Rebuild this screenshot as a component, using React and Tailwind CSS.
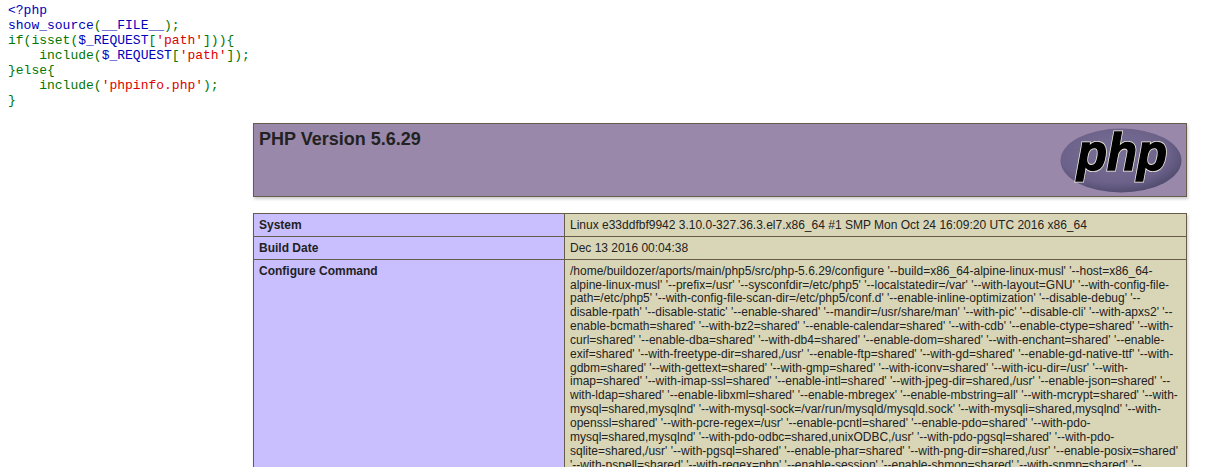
const configureLines = [
  "/home/buildozer/aports/main/php5/src/php-5.6.29/configure '--build=x86_64-alpine-linux-musl' '--host=x86_64-",
  "alpine-linux-musl' '--prefix=/usr' '--sysconfdir=/etc/php5' '--localstatedir=/var' '--with-layout=GNU' '--with-config-file-",
  "path=/etc/php5' '--with-config-file-scan-dir=/etc/php5/conf.d' '--enable-inline-optimization' '--disable-debug' '--",
  "disable-rpath' '--disable-static' '--enable-shared' '--mandir=/usr/share/man' '--with-pic' '--disable-cli' '--with-apxs2' '--",
  "enable-bcmath=shared' '--with-bz2=shared' '--enable-calendar=shared' '--with-cdb' '--enable-ctype=shared' '--with-",
  "curl=shared' '--enable-dba=shared' '--with-db4=shared' '--enable-dom=shared' '--with-enchant=shared' '--enable-",
  "exif=shared' '--with-freetype-dir=shared,/usr' '--enable-ftp=shared' '--with-gd=shared' '--enable-gd-native-ttf' '--with-",
  "gdbm=shared' '--with-gettext=shared' '--with-gmp=shared' '--with-iconv=shared' '--with-icu-dir=/usr' '--with-",
  "imap=shared' '--with-imap-ssl=shared' '--enable-intl=shared' '--with-jpeg-dir=shared,/usr' '--enable-json=shared' '--",
  "with-ldap=shared' '--enable-libxml=shared' '--enable-mbregex' '--enable-mbstring=all' '--with-mcrypt=shared' '--with-",
  "mysql=shared,mysqlnd' '--with-mysql-sock=/var/run/mysqld/mysqld.sock' '--with-mysqli=shared,mysqlnd' '--with-",
  "openssl=shared' '--with-pcre-regex=/usr' '--enable-pcntl=shared' '--enable-pdo=shared' '--with-pdo-",
  "mysql=shared,mysqlnd' '--with-pdo-odbc=shared,unixODBC,/usr' '--with-pdo-pgsql=shared' '--with-pdo-",
  "sqlite=shared,/usr' '--with-pgsql=shared' '--enable-phar=shared' '--with-png-dir=shared,/usr' '--enable-posix=shared'",
  "'--with-pspell=shared' '--with-regex=php' '--enable-session' '--enable-shmop=shared' '--with-snmp=shared' '--",
];

function B({ children }) {
  return <span className="text-[#0000bb]">{children}</span>;
}

function R({ children }) {
  return <span className="text-[#dd0000]">{children}</span>;
}

function Source() {
  return (
    <code className="block pl-2 pt-[3px] font-['Liberation_Mono',monospace] text-[13px] leading-[15px] whitespace-pre text-[#007700]">
      <div><B>&lt;?php</B></div>
      <div><B>show_source</B>(<B>__FILE__</B>);</div>
      <div>{'if(isset('}<B>$_REQUEST</B>[<R>'path'</R>{'])){'}</div>
      <div>{'    include('}<B>$_REQUEST</B>[<R>'path'</R>{']);'}</div>
      <div>{'}else{'}</div>
      <div>{'    include('}<R>'phpinfo.php'</R>{');'}</div>
      <div>{'}'}</div>
    </code>
  );
}

function PhpLogo() {
  const letters = {
    x: 17,
    y: 42,
    textLength: 90,
    lengthAdjust: 'spacingAndGlyphs',
    fontFamily: "'Liberation Sans', sans-serif",
    fontSize: 52,
    fontWeight: 700,
    fontStyle: 'italic',
  };
  return (
    <svg width="122" height="65" viewBox="0 0 122 65" className="block">
      <defs>
        <radialGradient id="logoFill" cx="45%" cy="40%" r="65%">
          <stop offset="0%" stopColor="#7a7199" />
          <stop offset="70%" stopColor="#6b6189" />
          <stop offset="100%" stopColor="#4b4768" />
        </radialGradient>
      </defs>
      <ellipse cx="61" cy="32.5" rx="60.5" ry="32" fill="url(#logoFill)" />
      <text {...letters} fill="#efeadb" stroke="#efeadb" strokeWidth="3">php</text>
      <text {...letters} fill="#000" stroke="#000" strokeWidth="1.4">php</text>
    </svg>
  );
}

function Row({ label, children }) {
  return (
    <tr>
      <td className="w-[311px] border border-[#665c48] bg-[#c9bfff] px-[5px] pt-[5px] pb-[3px] align-top font-bold">{label}</td>
      <td className="border border-[#665c48] bg-[#d9d6b8] px-[5px] pt-[5px] pb-[3px] align-top whitespace-nowrap">{children}</td>
    </tr>
  );
}

export default function App() {
  return (
    <div className="h-[467px] overflow-hidden bg-white font-['Liberation_Sans',Arial,sans-serif] text-[12px] leading-[13.85px] text-[#222222]">
      <Source />
      <div className="ml-[253px] mt-[15px] w-[934px]">
        <div className="flex h-[74px] justify-between border border-[#665c48] bg-[#9988a9] pl-[5px] pr-[4px] pt-1 shadow-[1px_2px_3px_#ccc]">
          <h1 className="pt-px text-[18px] leading-[21px] font-bold">PHP Version 5.6.29</h1>
          <PhpLogo />
        </div>
        <table className="mt-4 w-[934px] table-fixed border-collapse shadow-[1px_2px_3px_#ccc]">
          <tbody>
            <Row label="System">Linux e33ddfbf9942 3.10.0-327.36.3.el7.x86_64 #1 SMP Mon Oct 24 16:09:20 UTC 2016 x86_64</Row>
            <Row label="Build Date">Dec 13 2016 00:04:38</Row>
            <Row label="Configure Command">
              {configureLines.map((line) => (
                <div key={line}>{line}</div>
              ))}
            </Row>
          </tbody>
        </table>
      </div>
    </div>
  );
}
